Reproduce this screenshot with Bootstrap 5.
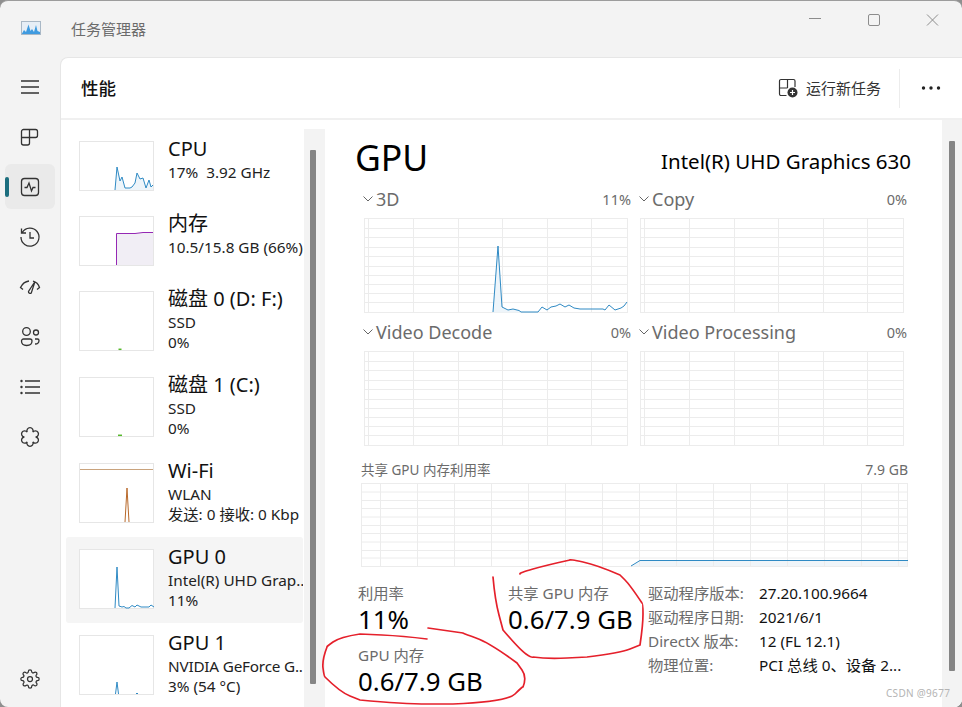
<!DOCTYPE html>
<html lang="zh">
<head>
<meta charset="utf-8">
<title>任务管理器</title>
<link href="https://cdn.jsdelivr.net/npm/bootstrap@5.3.0/dist/css/bootstrap.min.css" rel="stylesheet">
<style>
html,body{height:707px;overflow:hidden;background:#8f8f8f}
body{font-family:"Noto Sans","Noto Sans CJK SC",sans-serif;color:#111;font-size:15.3px}
.tm-win{position:relative;width:962px;height:707px;background:#f3f3f3;border-top:1px solid #9c9c9c;border-radius:8px;overflow:hidden}
.tm-title{height:56px;flex:none}
.tm-appicon{margin-left:21px;margin-top:-3px}
.tm-apptitle{margin-left:30px;font-size:15px;color:#6b6b6b}
.tm-ctl{width:59px;padding-top:12px}
.tm-rail{width:60px;flex:none;padding:5px 0 3px}
.tm-navi{height:50px;position:relative;color:#333}
.tm-navi.tm-on::before{content:"";position:absolute;left:5px;right:5px;top:2px;bottom:3px;background:#eaeaea;border-radius:6px}
.tm-navi.tm-on::after{content:"";position:absolute;left:5px;top:15px;width:4px;height:20px;background:#1c6e7e;border-radius:2px}
.tm-navi svg{position:relative;z-index:1}
.tm-panel{background:#fff;border-top:1px solid #e6e6e6;border-left:1px solid #e6e6e6;border-top-left-radius:8px;min-width:0}
.tm-head{height:62px;flex:none;border-bottom:2px solid #f0f0f0;padding-left:20px}
.tm-h1{font-size:17.5px;font-weight:500;color:#111}
.tm-run{font-size:15px;color:#333;margin-right:18px}
.tm-sep{width:1px;height:39px;background:#ececec}
.tm-more{width:62px}
.tm-list{width:243px;flex:none;overflow:hidden}
.tm-item{margin:9px 1px 0 5px;padding:12px 0 13px 13px;white-space:nowrap;overflow:hidden}
.tm-item+.tm-item{margin-top:0}
.tm-item.tm-sel{background:#f5f5f5;border-radius:3px}
.tm-thumb{width:75px;flex:none;display:block;margin-right:14px}
.tm-name{font-size:20px;line-height:26px;margin-top:-5px}
.tm-sub{line-height:20px;color:#222}
.tm-fit{letter-spacing:-.2px}
.tm-track{flex:none;background:#f3f3f3;display:flex;justify-content:center}
.tm-track1{width:21px;margin-top:9px;padding:21px 3px 0 0}
.tm-track1 .tm-bar{height:534px}
.tm-track2{width:20px;padding:21px 1px 0 0}
.tm-track2 .tm-bar{height:530px}
.tm-bar{width:6px;background:#858585;border-radius:1px}
.tm-main{width:617px;flex:none;padding:0 34px 0 36px}
.tm-top{height:68px;margin-left:-6px;margin-right:-3px}
.tm-gpu{font-size:35.5px;line-height:46px;padding-bottom:8px;color:#000}
.tm-model{font-size:20.5px;line-height:26px;color:#000;padding-bottom:14px}
.tm-two{display:grid;grid-template-columns:270px 270px;column-gap:6px;row-gap:8px}
.tm-cap{height:24px;line-height:22px;padding-bottom:2px;color:#6b6b6b;margin-bottom:6px}
.tm-capname{font-size:18px}
.tm-chev{margin:0 3px 0 2px}
.tm-pc{color:#6b6b6b;font-size:14.5px}
.tm-chart{display:block;margin-left:3px}
.tm-sharedcap{height:20px;line-height:20px;margin-top:14px;margin-bottom:3px;color:#6b6b6b;font-size:13.5px}
.tm-sharedr{font-size:14px}
.tm-chart2{display:block}
.tm-stats{margin-top:16px}
.tm-s1{width:150px;margin-left:-3px}
.tm-s2{width:140px}
.tm-lbl{font-size:15.3px;line-height:20px;color:#6b6b6b}
.tm-val{font-size:25.8px;line-height:33px;color:#000}
.tm-gap{margin-top:9px}
.tm-info{margin-top:-2px;line-height:24px;white-space:nowrap}
.tm-k{width:111px;color:#6b6b6b;flex:none}
.tm-v{color:#111}
.tm-ink{position:absolute;left:0;top:-1px;pointer-events:none}
.tm-wm{position:absolute;left:886px;top:685px;font-size:10px;line-height:14px;color:#b4b4b4;letter-spacing:.3px}
</style>
</head>
<body>
<svg width="0" height="0" class="d-block position-absolute">
  <symbol id="grid1" viewBox="0 0 264 95">
    <path d="M0 .5H264M0 10.5H264M0 19.5H264M0 29.5H264M0 38.5H264M0 48.5H264M0 57.5H264M0 66.5H264M0 75.5H264M0 84.5H264M0 94.5H264M.5 0V95M4.5 0V95M49.5 0V95M94.5 0V95M138.5 0V95M183.5 0V95M227.5 0V95M263.5 0V95" fill="none" stroke="#ececec"/>
  </symbol>
</svg>
<div class="tm-win d-flex flex-column">
  <div class="tm-title d-flex align-items-center">
    <svg class="tm-appicon" width="20" height="14" viewBox="0 0 20 14"><rect x=".5" y=".5" width="19" height="13" fill="#e6eef6" stroke="#a9b8c6"/><path d="M1 12.5L3 9 5 11 7.500 3.500 9.500 10 11 8 13 11 15 4 16.500 10 19 11V13H1Z" fill="#3f9be0"/></svg>
    <span class="tm-apptitle flex-grow-1">任务管理器</span>
    <div class="tm-ctl align-self-start d-flex justify-content-center"><svg width="14" height="14" viewBox="0 0 14 14" class="d-block"><path d="M1 5.500H13" stroke="#8c8c8c" stroke-width="1"/></svg></div>
    <div class="tm-ctl align-self-start d-flex justify-content-center"><svg width="14" height="14" viewBox="0 0 14 14"><rect x="1.500" y="1.500" width="11" height="11" rx="1.500" fill="none" stroke="#8c8c8c"/></svg></div>
    <div class="tm-ctl align-self-start d-flex justify-content-center"><svg width="14" height="14" viewBox="0 0 14 14"><path d="M1 1.500L12 12.500M12 1.500L1 12.500" stroke="#8c8c8c"/></svg></div>
  </div>
  <div class="d-flex flex-grow-1" style="min-height:0">
    <nav class="tm-rail d-flex flex-column">
      <div class="tm-navi d-flex align-items-center justify-content-center"><svg width="24" height="24" viewBox="0 0 24 24" fill="none" stroke="#333" stroke-width="1.300"><path d="M3 6H21M3 12H21M3 18H21"/></svg></div>
      <div class="tm-navi d-flex align-items-center justify-content-center"><svg width="24" height="24" viewBox="0 0 24 24" fill="none" stroke="#333" stroke-width="1.300"><path d="M5.500 4.500H17.500a2 2 0 0 1 2 2V10.500a2 2 0 0 1-2 2H11.500V18a2 2 0 0 1-2 2H5.500a2 2 0 0 1-2-2V6.500a2 2 0 0 1 2-2ZM3.500 12.500H11.500M11.500 4.500V12.500"/></svg></div>
      <div class="tm-navi tm-on d-flex align-items-center justify-content-center"><svg width="24" height="24" viewBox="0 0 24 24" fill="none" stroke="#333" stroke-width="1.300"><rect x="3.500" y="3.500" width="17" height="17" rx="3"/><path d="M6.500 12.500H9L11 8 13.500 16 15 12.500H17.500"/></svg></div>
      <div class="tm-navi d-flex align-items-center justify-content-center"><svg width="24" height="24" viewBox="0 0 24 24" fill="none" stroke="#333" stroke-width="1.300"><path d="M4.300 7.500A9 9 0 1 1 3 12M3.500 3.500V8H8M12 7V13H16"/></svg></div>
      <div class="tm-navi d-flex align-items-center justify-content-center"><svg width="24" height="24" viewBox="0 0 24 24" fill="none" stroke="#333" stroke-width="1.300"><path d="M5 14.500L2.500 12.500C4 9.500 7 6.500 11 6M15 6.200C18 7 20.500 9.500 21.500 12.500L19 14.500M17 6.500L10.500 16.500a1.700 1.700 0 0 0 2.800 1.500Z"/></svg></div>
      <div class="tm-navi d-flex align-items-center justify-content-center"><svg width="24" height="24" viewBox="0 0 24 24" fill="none" stroke="#333" stroke-width="1.300"><circle cx="8.500" cy="6.500" r="3.800"/><circle cx="18" cy="7.500" r="2.500"/><path d="M3.500 16a2 2 0 0 1 2-2H12a2 2 0 0 1 2 2c0 3-2.500 4.500-5.300 4.500S3.500 19 3.500 16ZM17 14H19.500a1.500 1.500 0 0 1 1.500 1.500c0 2-1.500 3.500-4 3.500"/></svg></div>
      <div class="tm-navi d-flex align-items-center justify-content-center"><svg width="24" height="24" viewBox="0 0 24 24" fill="none" stroke="#333" stroke-width="1.300"><path d="M7 6H22M7 12H22M7 18H22"/><path d="M3.500 6h.01M3.500 12h.01M3.500 18h.01" stroke-width="2.400" stroke-linecap="round"/></svg></div>
      <div class="tm-navi d-flex align-items-center justify-content-center"><svg width="24" height="24" viewBox="0 0 24 24" fill="none" stroke="#333" stroke-width="1.300"><path d="M14.800 7.150A3.100 3.100 0 1 1 17.600 12 3.100 3.100 0 1 1 14.800 16.850 3.100 3.100 0 1 1 9.200 16.850 3.100 3.100 0 1 1 6.400 12 3.100 3.100 0 1 1 9.200 7.150 3.100 3.100 0 1 1 14.800 7.150Z"/></svg></div>
      <div class="tm-navi mt-auto d-flex align-items-center justify-content-center"><svg width="20" height="20" viewBox="0 0 24 24" fill="none" stroke="#333" stroke-width="1.500"><circle cx="12" cy="12" r="3"/><path d="M19.400 15a1.650 1.650 0 0 0 .33 1.820l.06.06a2 2 0 0 1 0 2.830 2 2 0 0 1-2.830 0l-.06-.06a1.650 1.650 0 0 0-1.820-.33 1.650 1.650 0 0 0-1 1.510V21a2 2 0 0 1-2 2 2 2 0 0 1-2-2v-.09A1.650 1.650 0 0 0 9 19.400a1.650 1.650 0 0 0-1.820.33l-.06.06a2 2 0 0 1-2.830 0 2 2 0 0 1 0-2.830l.06-.06a1.650 1.650 0 0 0 .33-1.820 1.650 1.650 0 0 0-1.510-1H3a2 2 0 0 1-2-2 2 2 0 0 1 2-2h.09A1.650 1.650 0 0 0 4.600 9a1.650 1.650 0 0 0-.33-1.820l-.06-.06a2 2 0 0 1 0-2.830 2 2 0 0 1 2.830 0l.06.06a1.650 1.650 0 0 0 1.820.33H9a1.650 1.650 0 0 0 1-1.510V3a2 2 0 0 1 2-2 2 2 0 0 1 2 2v.09a1.650 1.650 0 0 0 1 1.510 1.650 1.650 0 0 0 1.820-.33l.06-.06a2 2 0 0 1 2.830 0 2 2 0 0 1 0 2.830l-.06.06a1.650 1.650 0 0 0-.33 1.820V9a1.650 1.650 0 0 0 1.510 1H21a2 2 0 0 1 2 2 2 2 0 0 1-2 2h-.09a1.650 1.650 0 0 0-1.510 1z"/></svg></div>
    </nav>
    <section class="tm-panel flex-grow-1 d-flex flex-column">
      <header class="tm-head d-flex align-items-center">
        <span class="tm-h1 flex-grow-1">性能</span>
        <div class="d-flex align-items-center gap-2 tm-run">
          <svg width="20" height="20" viewBox="0 0 20 20" fill="none" stroke="#333" stroke-width="1.200"><path d="M8.500 17.500H2.500a1.500 1.500 0 0 1-1-1.500V3a1.500 1.500 0 0 1 1.500-1.500H15.500a1.500 1.500 0 0 1 1.500 1.500V9M1.500 10H9.500M9.500 1.500V10"/><circle cx="14.500" cy="14.500" r="5" fill="#333" stroke="none"/><path d="M14.500 12V17M12 14.500H17" stroke="#fff"/></svg>
          <span>运行新任务</span>
        </div>
        <div class="tm-sep"></div>
        <div class="tm-more d-flex justify-content-center"><svg width="20" height="6" viewBox="0 0 20 6" fill="#222"><circle cx="2.500" cy="3" r="1.700"/><circle cx="10" cy="3" r="1.700"/><circle cx="17.500" cy="3" r="1.700"/></svg></div>
      </header>
      <div class="d-flex flex-grow-1" style="min-height:0">
        <div class="tm-list">
          <div class="tm-item d-flex">
            <svg class="tm-thumb" width="75" height="50" viewBox="0 0 75 50"><rect x=".5" y=".5" width="74" height="49" fill="#fff" stroke="#e6e6e6"/><path d="M36 49L38 26 41 40 43 36 46 47 51 47 53 46 56 42 58 32 61 38 64 37 67 47 70 39 72 46 74 44V49Z" fill="#eef5fa" stroke="none"/><path d="M36 49L38 26 41 40 43 36 46 47 51 47 53 46 56 42 58 32 61 38 64 37 67 47 70 39 72 46 74 44" fill="none" stroke="#2f8ac4"/></svg>
            <div><div class="tm-name">CPU</div><div class="tm-sub">17%&nbsp; 3.92 GHz</div></div>
          </div>
          <div class="tm-item d-flex">
            <svg class="tm-thumb" width="75" height="50" viewBox="0 0 75 50"><rect x=".5" y=".5" width="74" height="49" fill="#fff" stroke="#e6e6e6"/><path d="M37.500 49V17H74V49Z" fill="#f1eef5" stroke="none"/><path d="M37.500 49V17.500H56L64 16.500H74" fill="none" stroke="#9528b4"/></svg>
            <div><div class="tm-name">内存</div><div class="tm-sub">10.5/15.8 GB (66%)</div></div>
          </div>
          <div class="tm-item d-flex">
            <svg class="tm-thumb" width="75" height="60" viewBox="0 0 75 60"><rect x=".5" y=".5" width="74" height="59" fill="#fff" stroke="#e6e6e6"/><path d="M39.500 58.300H42.500" stroke="#55b82a" stroke-width="1.500"/></svg>
            <div><div class="tm-name">磁盘 0 (D: F:)</div><div class="tm-sub">SSD</div><div class="tm-sub">0%</div></div>
          </div>
          <div class="tm-item d-flex">
            <svg class="tm-thumb" width="75" height="60" viewBox="0 0 75 60"><rect x=".5" y=".5" width="74" height="59" fill="#fff" stroke="#e6e6e6"/><path d="M39 58.300H43" stroke="#55b82a" stroke-width="1.500"/></svg>
            <div><div class="tm-name">磁盘 1 (C:)</div><div class="tm-sub">SSD</div><div class="tm-sub">0%</div></div>
          </div>
          <div class="tm-item d-flex">
            <svg class="tm-thumb" width="75" height="60" viewBox="0 0 75 60"><rect x=".5" y=".5" width="74" height="59" fill="#fff" stroke="#e6e6e6"/><path d="M1 6.500H74" stroke="#c9a37d"/><path d="M46 59L48 25 50 59" fill="none" stroke="#b8692a"/></svg>
            <div><div class="tm-name">Wi-Fi</div><div class="tm-sub">WLAN</div><div class="tm-sub">发送: 0 接收: 0 Kbp</div></div>
          </div>
          <div class="tm-item tm-sel d-flex">
            <svg class="tm-thumb" width="75" height="60" viewBox="0 0 75 60"><rect x=".5" y=".5" width="74" height="59" fill="#fff" stroke="#e6e6e6"/><path d="M36 59L38 18 40 57 43 58 45 57.500 47 59 50 59 53 56.500 56 58 58 56 62 58 70 58 72 56 75 58" fill="none" stroke="#2f8ac4"/></svg>
            <div><div class="tm-name">GPU 0</div><div class="tm-sub">Intel(R) UHD Grap..</div><div class="tm-sub">11%</div></div>
          </div>
          <div class="tm-item d-flex">
            <svg class="tm-thumb" width="75" height="60" viewBox="0 0 75 60"><rect x=".5" y=".5" width="74" height="59" fill="#fff" stroke="#e6e6e6"/><path d="M36.500 59L38 47 39.500 59M57 59L58 58 59 59" fill="none" stroke="#2f8ac4"/></svg>
            <div><div class="tm-name">GPU 1</div><div class="tm-sub tm-fit">NVIDIA GeForce G..</div><div class="tm-sub">3% (54 °C)</div></div>
          </div>
        </div>
        <div class="tm-track tm-track1"><div class="tm-bar"></div></div>
        <main class="tm-main">
          <div class="tm-top d-flex justify-content-between align-items-end">
            <div class="tm-gpu">GPU</div>
            <div class="tm-model">Intel(R) UHD Graphics 630</div>
          </div>
          <div class="tm-two">
            <div>
              <div class="tm-cap d-flex align-items-center"><svg class="tm-chev" width="10" height="6" viewBox="0 0 10 6"><path d="M.5 .5L5 5 9.500 .5" fill="none" stroke="#666"/></svg><span class="tm-capname flex-grow-1">3D</span><span class="tm-pc">11%</span></div>
              <svg class="tm-chart" width="264" height="95"><use href="#grid1"/><path d="M129 94L134 28 138 89 144 92 149 91 155 92.500 157 94V94.500H129Z" fill="#eef5fa"/><path d="M129 94L134 28 138 89 144 92 149 91 155 92.500 157 94H174L178 89 183 92 187 89 192 88 196 86 201 89 205 87 210 90 216 91H239L241 92 245 87 251 92 257 90 260 88 263 84" fill="none" stroke="#2f8ac4"/></svg>
            </div>
            <div>
              <div class="tm-cap d-flex align-items-center"><svg class="tm-chev" width="10" height="6" viewBox="0 0 10 6"><path d="M.5 .5L5 5 9.500 .5" fill="none" stroke="#666"/></svg><span class="tm-capname flex-grow-1">Copy</span><span class="tm-pc">0%</span></div>
              <svg class="tm-chart" width="264" height="95"><use href="#grid1"/></svg>
            </div>
            <div>
              <div class="tm-cap d-flex align-items-center"><svg class="tm-chev" width="10" height="6" viewBox="0 0 10 6"><path d="M.5 .5L5 5 9.500 .5" fill="none" stroke="#666"/></svg><span class="tm-capname flex-grow-1">Video Decode</span><span class="tm-pc">0%</span></div>
              <svg class="tm-chart" width="264" height="95"><use href="#grid1"/></svg>
            </div>
            <div>
              <div class="tm-cap d-flex align-items-center"><svg class="tm-chev" width="10" height="6" viewBox="0 0 10 6"><path d="M.5 .5L5 5 9.500 .5" fill="none" stroke="#666"/></svg><span class="tm-capname flex-grow-1">Video Processing</span><span class="tm-pc">0%</span></div>
              <svg class="tm-chart" width="264" height="95"><use href="#grid1"/></svg>
            </div>
          </div>
          <div class="tm-sharedcap d-flex justify-content-between"><span>共享 GPU 内存利用率</span><span class="tm-sharedr">7.9 GB</span></div>
          <svg class="tm-chart2" width="547" height="84" viewBox="0 0 547 84">
            <path d="M270 83L279 78H547V84H270Z" fill="#f0f5f9"/>
            <path d="M0 .5H547M0 9H547M0 17.500H547M0 25.500H547M0 34H547M0 42.500H547M0 50.500H547M0 59H547M0 67.500H547M0 75H547M0 83.500H547M.5 0V84M19.500 0V84M56.500 0V84M93.500 0V84M130.500 0V84M167.500 0V84M204.500 0V84M241.500 0V84M278.500 0V84M315.500 0V84M352.500 0V84M389.500 0V84M426.500 0V84M463.500 0V84M500.500 0V84M537.500 0V84M546.500 0V84" fill="none" stroke="#ececec"/>
            <path d="M270 83L279 77.500H547" fill="none" stroke="#2f8ac4"/>
          </svg>
          <div class="tm-stats d-flex">
            <div class="tm-s1">
              <div class="tm-lbl">利用率</div><div class="tm-val">11%</div>
              <div class="tm-lbl tm-gap">GPU 内存</div><div class="tm-val">0.6/7.9 GB</div>
            </div>
            <div class="tm-s2">
              <div class="tm-lbl">共享 GPU 内存</div><div class="tm-val">0.6/7.9 GB</div>
            </div>
            <div class="tm-info">
              <div class="d-flex"><span class="tm-k">驱动程序版本:</span><span class="tm-v">27.20.100.9664</span></div>
              <div class="d-flex"><span class="tm-k">驱动程序日期:</span><span class="tm-v">2021/6/1</span></div>
              <div class="d-flex"><span class="tm-k">DirectX 版本:</span><span class="tm-v">12 (FL 12.1)</span></div>
              <div class="d-flex"><span class="tm-k">物理位置:</span><span class="tm-v">PCI 总线 0、设备 2...</span></div>
            </div>
          </div>
        </main>
        <div class="tm-track tm-track2"><div class="tm-bar"></div></div>
      </div>
    </section>
  </div>
  <svg class="tm-ink" width="962" height="707" viewBox="0 0 962 707" fill="none" stroke="#e5202b" stroke-width="1.700" stroke-linecap="round" stroke-linejoin="round">
    <path d="M427 639Q403 636 382 635T360 634Q340 637 333 642T327 647Q322 660 323 668T325 677Q340 692 350 696T360 700Q403 704 428 704T453 704Q507 702 515 694T523 687Q527 677 522 670T517 663Q490 643 476 638T463 633Q428 628 428 628"/>
    <path d="M493 577Q495 600 499 615T503 630Q520 650 526 654T533 657Q547 659 567 658T587 657Q620 653 630 649T640 645Q643 625 643 614T642 603Q630 585 625 580T620 575Q597 565 583 562T570 560Q547 565 533 569T520 574"/>
  </svg>
  <div class="tm-wm">CSDN @9677</div>
</div>
<script src="https://cdn.jsdelivr.net/npm/bootstrap@5.3.0/dist/js/bootstrap.bundle.min.js"></script>
</body>
</html>
